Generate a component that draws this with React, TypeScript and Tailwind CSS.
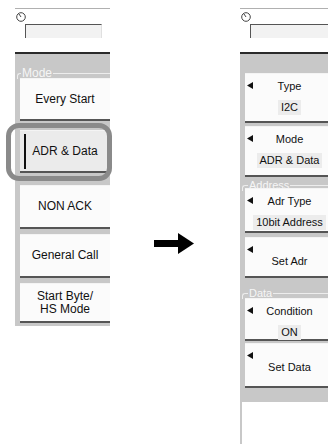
import React from 'react'

const sans = "font-['Liberation_Sans',Arial,sans-serif]"

function Knob({ left, right }: { left: number; right: number }) {
  return (
    <div className="h-[44px] bg-white border-t border-[#b0b0b0] relative">
      <svg width="10" height="10" viewBox="0 0 10 10" className="absolute left-[1px] top-[3px]">
        <circle cx="5" cy="5" r="4.3" fill="#fff" stroke="#444" strokeWidth="1" />
        <line x1="5" y1="5" x2="3" y2="2" stroke="#444" strokeWidth="1" />
      </svg>
      <div
        className="absolute top-[15px] h-[14px] border-t border-l border-[#555] border-r border-r-[#e0e0e0] bg-[#f2f2f2]"
        style={{ left, right }}
      />
    </div>
  )
}

function Legend({ text, ml, size }: { text: string; ml: number; size: string }) {
  return (
    <div className="relative h-[8px]">
      <div className="absolute top-[3px] left-[2px] right-0 h-[6px] border-t border-l border-[#ededed] rounded-tl-[3px]" />
      <span
        className={`absolute -top-[3px] px-[1px] bg-[#c8c8c8] leading-[13px] text-[#f6f6f6] ${size}`}
        style={{ left: ml }}
      >
        {text}
      </span>
    </div>
  )
}

function LeftBtn({ label, h, mt, selected }: { label: React.ReactNode; h: number; mt: number; selected?: boolean }) {
  return (
    <div
      className={`relative flex items-center justify-center border-b-2 border-[#555] border-t border-t-[#f4f4f4] text-[12px] leading-[13px] text-[#111] text-center ${
        selected ? 'bg-[#ebebeb]' : 'bg-[#fbfbfb]'
      }`}
      style={{ height: h, marginTop: mt }}
    >
      {selected && (
        <>
          <div className="absolute left-[4px] top-[3px] bottom-[2px] w-[2px] bg-[#111]" />
          <div className="absolute -left-[14px] -top-[8px] -right-[2px] -bottom-[10px] border-[5px] border-[#8a8a8a] rounded-[13px]" />
        </>
      )}
      <span>{label}</span>
    </div>
  )
}

function Tri() {
  return (
    <svg width="6" height="7" viewBox="0 0 6 7" className="absolute left-[2px] top-[8px]">
      <polygon points="6,0 6,7 0,3.5" fill="#111" />
    </svg>
  )
}

function RightBtn({
  label,
  value,
  h,
  mt,
}: {
  label: string
  value?: string
  h: number
  mt: number
}) {
  return (
    <div
      className="relative flex flex-col items-center bg-[#fbfbfb] border-b-2 border-[#555] border-t border-t-[#f4f4f4] text-[11px] leading-[13px] text-[#111] pr-[6px]"
      style={{ height: h, marginTop: mt }}
    >
      <Tri />
      {value ? (
        <>
          <span className="mt-[6px]">{label}</span>
          <span className="mt-[7px] px-[3px] py-[1px] bg-[#ececec]">{value}</span>
        </>
      ) : (
        <span className="mt-[17px]">{label}</span>
      )}
    </div>
  )
}

export default function App() {
  return (
    <div className={`relative w-[328px] h-[444px] overflow-hidden bg-white flex items-start ${sans}`}>
      {/* left panel */}
      <div className="ml-[15px] mt-[8px] w-[95px] shrink-0 bg-[#c8c8c8]">
        <Knob left={10} right={8} />
        <div className="h-[2px] bg-[#2a2a2a]" />
        <div className="h-[16px] bg-[#c8c8c8]" />
        <Legend text="Mode" ml={6} size="text-[12px]" />
        <div className="pl-[5px] pb-[3px]">
          <LeftBtn label="Every Start" h={43} mt={0} />
          <LeftBtn label="ADR & Data" h={43} mt={9} selected />
          <LeftBtn label="NON ACK" h={44} mt={12} />
          <LeftBtn label="General Call" h={44} mt={5} />
          <LeftBtn
            label={
              <>
                Start Byte/
                <br />
                HS Mode
              </>
            }
            h={40}
            mt={5}
          />
        </div>
      </div>

      {/* arrow */}
      <svg width="40" height="21" viewBox="0 0 40 21" className="ml-[44px] mt-[233px] shrink-0">
        <rect x="0" y="7" width="25" height="7" fill="#000" />
        <polygon points="24,0 40,10.5 24,21" fill="#000" />
      </svg>

      {/* right panel */}
      <div className="ml-[46px] mt-[8px] w-[100px] shrink-0 bg-[#c8c8c8]">
        <Knob left={10} right={0} />
        <div className="h-[2px] bg-[#2a2a2a]" />
        <div className="h-[19px] bg-[#c8c8c8]" />
        <div className="pl-[5px]">
          <RightBtn label="Type" value="I2C" h={50} mt={0} />
          <RightBtn label="Mode" value="ADR & Data" h={51} mt={3} />
        </div>
        <div className="mt-[5px]">
          <Legend text="Address" ml={8} size="text-[11px]" />
        </div>
        <div className="pl-[5px]">
          <RightBtn label="Adr Type" value="10bit Address" h={45} mt={-2} />
          <RightBtn label="Set Adr" h={41} mt={4} />
        </div>
        <div className="mt-[12px]">
          <Legend text="Data" ml={8} size="text-[11px]" />
        </div>
        <div className="pl-[5px]">
          <RightBtn label="Condition" value="ON" h={43} mt={0} />
          <RightBtn label="Set Data" h={45} mt={2} />
        </div>
        <div className="h-[14px]" />
        <div className="h-[50px] bg-white ml-[2px]" />
      </div>
    </div>
  )
}
